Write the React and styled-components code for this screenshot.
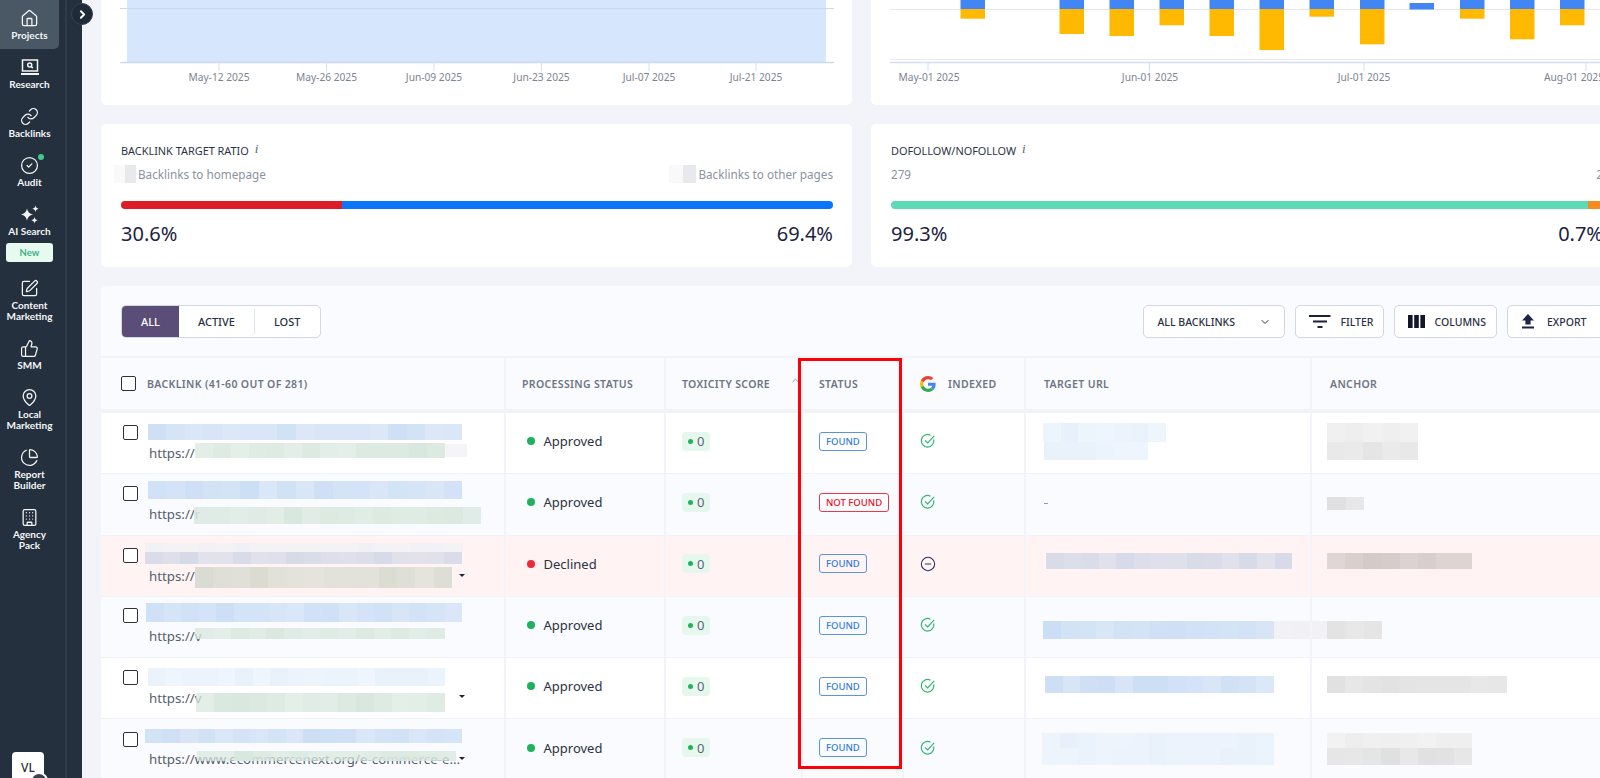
import React from "react";
import styled, { createGlobalStyle } from "styled-components";
import {
  House,
  Link as LinkIcon,
  CircleCheck,
  SquarePen,
  ThumbsUp,
  MapPin,
  ChartPie,
  Building,
  ChevronRight,
  ChevronDown,
  ChevronUp,
  CircleMinus,
} from "lucide-react";

const GlobalStyle = createGlobalStyle`
  html, body {
    margin: 0;
    height: 100%;
    overflow: hidden;
    background: #f2f4f9;
    font-family: "Noto Sans", Arial, sans-serif;
  }
`;

/* ---- data ---- */

const NAV = [
  { icon: "home", label: ["Projects"], active: true },
  { icon: "research", label: ["Research"] },
  { icon: "link", label: ["Backlinks"] },
  { icon: "audit", label: ["Audit"], dot: true },
  { icon: "ai", label: ["AI Search"], isNew: true },
  { icon: "pen", label: ["Content", "Marketing"] },
  { icon: "thumb", label: ["SMM"] },
  { icon: "pin", label: ["Local", "Marketing"] },
  { icon: "pie", label: ["Report", "Builder"] },
  { icon: "building", label: ["Agency", "Pack"] },
];

const TONES = {
  blue: [204, 222, 245],
  paleBlue: [232, 241, 251],
  dusk: [214, 218, 232],
  green: [217, 232, 223],
  dirt: [218, 220, 210],
  grey: [224, 224, 224],
  paleGrey: [238, 238, 238],
  rose: [212, 202, 200],
  faint: [241, 241, 245],
};

// redaction boxes: [left, top, width, height, tone, seed], relative to their cell
const ROWS = [
  {
    checkTop: 11.5,
    urlTop: 30,
    url: "https://",
    process: "Approved",
    status: "FOUND",
    indexed: true,
    back: [
      [47, 11, 314, 16, "blue", 1],
      [94, 30, 250, 15, "green", 2],
      [344, 31, 22, 13, "faint", 3],
    ],
    target: [
      [17, 10, 123, 19, "paleBlue", 4],
      [18, 29, 104, 18, "paleBlue", 5],
    ],
    anchor: [
      [15, 10, 91, 19, "paleGrey", 6],
      [15, 29, 91, 18, "grey", 7],
    ],
  },
  {
    checkTop: 12,
    urlTop: 30,
    url: "https://r",
    process: "Approved",
    status: "NOT FOUND",
    indexed: true,
    dash: true,
    back: [
      [47, 7, 314, 18, "blue", 8],
      [93, 33, 287, 17, "green", 9],
    ],
    target: [],
    anchor: [[15, 23, 37, 13, "grey", 10]],
  },
  {
    checkTop: 12,
    urlTop: 30,
    url: "https://",
    process: "Declined",
    status: "FOUND",
    indexed: false,
    caret: 38,
    tint: true,
    back: [
      [44, 7, 318, 9, "faint", 11],
      [44, 16, 317, 12, "dusk", 12],
      [94, 31, 257, 21, "dirt", 13],
    ],
    target: [[20, 17, 246, 16, "dusk", 14]],
    anchor: [[15, 17, 145, 16, "rose", 15]],
  },
  {
    checkTop: 11,
    urlTop: 29,
    url: "https://v",
    process: "Approved",
    status: "FOUND",
    indexed: true,
    back: [
      [45, 6, 316, 19, "blue", 16],
      [94, 31, 250, 11, "green", 17],
    ],
    target: [
      [17, 24, 231, 18, "blue", 18],
      [248, 24, 74, 18, "faint", 19],
    ],
    anchor: [[15, 24, 55, 18, "grey", 20]],
  },
  {
    checkTop: 11.5,
    urlTop: 30,
    url: "https://v",
    process: "Approved",
    status: "FOUND",
    indexed: true,
    caret: 37,
    back: [
      [47, 10, 297, 18, "paleBlue", 21],
      [95, 35, 249, 19, "green", 22],
    ],
    target: [[19, 18, 229, 17, "blue", 23]],
    anchor: [[15, 18, 180, 17, "grey", 24]],
  },
  {
    checkTop: 12.5,
    urlTop: 30,
    url: "https://www.ecommercenext.org/e-commerce-e...",
    process: "Approved",
    status: "FOUND",
    indexed: true,
    caret: 38,
    back: [
      [44, 10, 317, 14, "blue", 25],
      [96, 32, 259, 10, "green", 26],
    ],
    target: [
      [16, 14, 232, 15, "paleBlue", 27],
      [16, 29, 232, 17, "paleBlue", 28],
    ],
    anchor: [
      [15, 14, 145, 15, "paleGrey", 29],
      [15, 29, 145, 17, "grey", 30],
    ],
  },
];

const AREA_TICKS = [
  [118, "May-12 2025"],
  [225.5, "May-26 2025"],
  [333, "Jun-09 2025"],
  [440.5, "Jun-23 2025"],
  [548, "Jul-07 2025"],
  [655, "Jul-21 2025"],
];

const BAR_TICKS = [
  [57, 58, "May-01 2025"],
  [278.5, 279, "Jun-01 2025"],
  [493, 493, "Jul-01 2025"],
  [715, 703, "Aug-01 2025"],
];

// left edge, bottom of the yellow part
const BARS = [
  [89.5, 18.7],
  [188.5, 34],
  [238.5, 36],
  [288.5, 25.3],
  [338.5, 36],
  [388.5, 50],
  [438.5, 16.7],
  [489, 44.3],
  [589, 18.7],
  [639, 39.3],
  [689, 25.3],
];

/* ---- icons ---- */

const ResearchIcon = () => (
  <svg width="20" height="20" viewBox="0 0 20 20" fill="none" stroke="currentColor" strokeWidth="1.5">
    <rect x="2.5" y="3" width="15" height="11" />
    <circle cx="9.7" cy="8" r="2" />
    <path d="M11.2 9.5l1.6 1.6" />
    <path d="M1 17h18" strokeWidth="2" />
  </svg>
);

const SparkleIcon = () => (
  <svg width="20" height="20" viewBox="0 0 20 20" fill="currentColor">
    <path d="M7 4.500c.7 3.600 2.400 5.300 6 6-3.600.7-5.300 2.400-6 6-.7-3.600-2.400-5.300-6-6 3.600-.7 5.300-2.400 6-6z" />
    <path d="M15.500 1.500c.4 2 1.200 2.800 3.200 3.200-2 .4-2.800 1.200-3.200 3.200-.4-2-1.200-2.800-3.200-3.200 2-.4 2.800-1.200 3.200-3.200z" />
    <path d="M14.500 13c.4 2 1.200 2.800 3.200 3.200-2 .4-2.800 1.200-3.200 3.200-.4-2-1.200-2.800-3.200-3.200 2-.4 2.800-1.200 3.200-3.200z" />
  </svg>
);

const NavGlyph = ({ name }) => {
  const props = { size: 19, strokeWidth: 1.6 };
  switch (name) {
    case "home":
      return <House {...props} />;
    case "research":
      return <ResearchIcon />;
    case "link":
      return <LinkIcon {...props} />;
    case "audit":
      return <CircleCheck {...props} />;
    case "ai":
      return <SparkleIcon />;
    case "pen":
      return <SquarePen {...props} />;
    case "thumb":
      return <ThumbsUp {...props} />;
    case "pin":
      return <MapPin {...props} />;
    case "pie":
      return <ChartPie {...props} />;
    default:
      return <Building {...props} />;
  }
};

const GoogleIcon = () => (
  <svg width="16" height="16" viewBox="0 0 48 48">
    <path fill="#EA4335" d="M24 9.500c3.540 0 6.710 1.220 9.210 3.600l6.850-6.850C35.900 2.380 30.470 0 24 0 14.620 0 6.510 5.380 2.560 13.220l7.980 6.190C12.430 13.720 17.740 9.500 24 9.500z" />
    <path fill="#4285F4" d="M46.980 24.550c0-1.570-.15-3.090-.38-4.550H24v9.020h12.940c-.58 2.960-2.260 5.480-4.780 7.180l7.730 6c4.510-4.180 7.090-10.360 7.090-17.650z" />
    <path fill="#FBBC05" d="M10.530 28.590c-.48-1.450-.76-2.990-.76-4.590s.27-3.140.76-4.590l-7.980-6.190C.92 16.460 0 20.120 0 24c0 3.880.92 7.540 2.560 10.780l7.970-6.190z" />
    <path fill="#34A853" d="M24 48c6.480 0 11.930-2.130 15.890-5.810l-7.730-6c-2.150 1.450-4.920 2.300-8.160 2.300-6.260 0-11.570-4.220-13.470-9.910l-7.980 6.190C6.510 42.620 14.620 48 24 48z" />
  </svg>
);

const FilterIcon = () => (
  <svg width="22" height="14" viewBox="0 0 22 14" fill="#1d2238">
    <rect x="0" y="0" width="21.500" height="2" />
    <rect x="4" y="5.500" width="14" height="2" />
    <rect x="8.500" y="11" width="5" height="2" />
  </svg>
);

const ColumnsIcon = () => (
  <svg width="17" height="14" viewBox="0 0 17 14" fill="#14172c">
    <rect x="0" y="0" width="4.600" height="13" />
    <rect x="6.200" y="0" width="4.600" height="13" />
    <rect x="12.400" y="0" width="4.600" height="13" />
  </svg>
);

const ExportIcon = () => (
  <svg width="14" height="15" viewBox="0 0 14 15" fill="#1d2448">
    <path d="M7 0l6 6.500H9.600v4H4.400v-4H1z" />
    <rect x="1" y="12.500" width="12" height="2" />
  </svg>
);

/* ---- redaction mosaic ---- */

const cellAlpha = (seed, i) => {
  const v = Math.sin(seed * 91.7 + i * 37.3) * 4375.5;
  return 0.68 + 0.32 * (v - Math.floor(v));
};

const Redaction = ({ box }) => {
  const [left, top, width, height, tone, seed] = box;
  const [r, g, b] = TONES[tone];
  const count = Math.max(1, Math.round(width / 18));
  return (
    <Mosaic style={{ left, top, width, height }}>
      {Array.from({ length: count }, (_, i) => (
        <MosaicCell key={i} style={{ background: `rgba(${r},${g},${b},${cellAlpha(seed, i)})` }} />
      ))}
    </Mosaic>
  );
};

/* ---- page ---- */

export default function App() {
  return (
    <Page>
      <GlobalStyle />
      <Sidebar>
        <ToggleButton>
          <ChevronRight size={13} strokeWidth={3.5} />
        </ToggleButton>
        <NavColumn>
          {NAV.map((item) => (
            <NavItem key={item.icon} $active={item.active}>
              <NavIcon>
                <NavGlyph name={item.icon} />
                {item.dot && <NavDot />}
              </NavIcon>
              {item.label.map((line) => (
                <NavLabel key={line}>{line}</NavLabel>
              ))}
              {item.isNew && <NewBadge>New</NewBadge>}
            </NavItem>
          ))}
          <Avatar>
            VL
            <AvatarBadge />
          </Avatar>
        </NavColumn>
      </Sidebar>

      <Main>
        <CardGrid>
          <ChartCard>
            <svg width="751" height="105" viewBox="0 0 751 105">
              <rect x="26" y="0" width="699" height="62" fill="#d6e6fc" />
              <line x1="19" x2="733" y1="8.500" y2="8.500" stroke="#c9d8ef" />
              <line x1="19" x2="733" y1="62.500" y2="62.500" stroke="#cbd9f2" strokeWidth="1.500" />
              {AREA_TICKS.map(([x, label]) => (
                <g key={label}>
                  <line x1={x} x2={x} y1="62" y2="71" stroke="#d5e0f2" />
                  <ChartLabel x={x} y="81" textAnchor="middle">
                    {label}
                  </ChartLabel>
                </g>
              ))}
            </svg>
          </ChartCard>
          <ChartCard>
            <svg width="751" height="105" viewBox="0 0 751 105">
              <line x1="19" x2="751" y1="9.500" y2="9.500" stroke="#e6e8ee" />
              <line x1="19" x2="751" y1="59.500" y2="59.500" stroke="#e9ebf0" />
              <line x1="19" x2="751" y1="62.500" y2="62.500" stroke="#d5dff1" strokeWidth="1.500" />
              {BARS.map(([x, bottom]) => (
                <g key={x}>
                  <rect x={x} y="0" width="24.500" height="9" fill="#4285f4" />
                  <rect x={x} y="9" width="24.500" height={bottom - 9} fill="#ffb900" />
                </g>
              ))}
              <rect x="538.500" y="3" width="24.500" height="6.500" fill="#4285f4" />
              {BAR_TICKS.map(([tick, x, label]) => (
                <g key={label}>
                  <line x1={tick} x2={tick} y1="62" y2="71" stroke="#d5e0f2" />
                  <ChartLabel x={x} y="81" textAnchor="middle">
                    {label}
                  </ChartLabel>
                </g>
              ))}
            </svg>
          </ChartCard>

          <RatioCard>
            <RatioTitle>
              Backlink target ratio <InfoMark>i</InfoMark>
            </RatioTitle>
            <RatioLegend>
              <LegendItem>
                <Smudge $width={22} $pull={7} />
                Backlinks to homepage
              </LegendItem>
              <LegendItem>
                <Smudge $width={27} />
                Backlinks to other pages
              </LegendItem>
            </RatioLegend>
            <Bar>
              <BarPart $color="#dc1d28" style={{ width: "31.1%" }} />
              <BarPart $color="#0d75fb" style={{ flex: 1 }} />
            </Bar>
            <RatioValues>
              <span>30.6%</span>
              <span>69.4%</span>
            </RatioValues>
          </RatioCard>

          <RatioCard>
            <RatioTitle>
              Dofollow/Nofollow <InfoMark>i</InfoMark>
            </RatioTitle>
            <RatioLegend>
              <LegendItem>279</LegendItem>
              <LegendItem>2</LegendItem>
            </RatioLegend>
            <Bar>
              <BarPart $color="#5cdab5" style={{ width: "97.9%" }} />
              <BarPart $color="#f98a1e" style={{ flex: 1 }} />
            </Bar>
            <RatioValues>
              <span>99.3%</span>
              <span>0.7%</span>
            </RatioValues>
          </RatioCard>
        </CardGrid>

        <Panel>
          <Toolbar>
            <Tabs>
              <Tab $selected>All</Tab>
              <Tab>Active</Tab>
              <TabDivider />
              <Tab>Lost</Tab>
            </Tabs>
            <ToolbarActions>
              <SelectButton>
                All backlinks
                <ChevronDown size={12} strokeWidth={2} />
              </SelectButton>
              <ToolButton>
                <FilterIcon />
                Filter
              </ToolButton>
              <ToolButton>
                <ColumnsIcon />
                Columns
              </ToolButton>
              <ExportButton>
                <ExportIcon />
                Export
              </ExportButton>
            </ToolbarActions>
          </Toolbar>

          <HeaderRow>
            <HeaderCell $first>
              <CheckBox />
              Backlink (41-60 out of 281)
            </HeaderCell>
            <HeaderCell>Processing status</HeaderCell>
            <HeaderCell>
              Toxicity score
              <SortMark>
                <ChevronUp size={11} strokeWidth={1.6} />
              </SortMark>
            </HeaderCell>
            <HeaderCell>Status</HeaderCell>
            <HeaderCell>
              <GoogleIcon />
              Indexed
            </HeaderCell>
            <HeaderCell $wide>Target URL</HeaderCell>
            <HeaderCell $wide>Anchor</HeaderCell>
          </HeaderRow>

          <RowList>
            {ROWS.map((row, index) => (
              <Row key={index} $tint={row.tint} $odd={index % 2 === 0}>
                <BacklinkCell>
                  <CheckBox style={{ marginTop: row.checkTop }} />
                  <UrlText style={{ marginTop: row.urlTop }}>{row.url}</UrlText>
                  {row.back.map((box) => (
                    <Redaction key={box[5]} box={box} />
                  ))}
                  {row.caret && <Caret style={{ top: row.caret }} />}
                </BacklinkCell>
                <Cell>
                  <ProcessDot $declined={row.process === "Declined"} />
                  <ProcessText>{row.process}</ProcessText>
                </Cell>
                <Cell>
                  <ScoreBadge>
                    <ScoreDot />0
                  </ScoreBadge>
                </Cell>
                <Cell>
                  <StatusBadge $missing={row.status === "NOT FOUND"}>{row.status}</StatusBadge>
                </Cell>
                <Cell>
                  {row.indexed ? (
                    <IndexedMark>
                      <svg width="16" height="16" viewBox="0 0 16 16" fill="none" stroke="#2fb673" strokeWidth="1.200">
                        <path d="M13.700 6.300A6.300 6.300 0 1 1 10.500 2.200" />
                        <path d="M5 7.300l2.600 2.600 6.600-7" />
                      </svg>
                    </IndexedMark>
                  ) : (
                    <CircleMinus size={16} strokeWidth={1.6} color="#2b2f55" />
                  )}
                </Cell>
                <BlurCell>
                  {row.dash && <Dash />}
                  {row.target.map((box) => (
                    <Redaction key={box[5]} box={box} />
                  ))}
                </BlurCell>
                <BlurCell>
                  {row.anchor.map((box) => (
                    <Redaction key={box[5]} box={box} />
                  ))}
                </BlurCell>
              </Row>
            ))}
          </RowList>

          <Highlight />
        </Panel>
      </Main>
    </Page>
  );
}

const COLUMNS = "403px 160px 137px 101px 122px 286px 1fr";

const Page = styled.div`
  display: flex;
  width: 1600px;
  height: 778px;
  overflow: hidden;
  background: #f2f4f9;
`;

const Sidebar = styled.aside`
  position: relative;
  flex: 0 0 82px;
  height: 778px;
  background: #24303d;
  z-index: 2;
`;

const ToggleButton = styled.div`
  position: absolute;
  left: 71px;
  top: 3px;
  width: 22px;
  height: 22px;
  border-radius: 50%;
  display: flex;
  align-items: center;
  justify-content: center;
  background: #1f2a36;
  border: 1px solid #35414e;
  box-sizing: border-box;
  color: #fff;
`;

const NavColumn = styled.nav`
  width: 67px;
  height: 100%;
  box-sizing: border-box;
  border-right: 2px solid #2f3b49;
  display: flex;
  flex-direction: column;
  overflow: hidden;
`;

const NavItem = styled.div`
  width: 59px;
  padding: 8px 0 8.5px;
  display: flex;
  flex-direction: column;
  align-items: center;
  color: #f3f5f7;
  background: ${(p) => (p.$active ? "#4a5866" : "transparent")};
  border-radius: 0 0 5px 0;
`;

const NavIcon = styled.div`
  position: relative;
  width: 20px;
  height: 20px;
  margin-bottom: 1.5px;
  display: flex;
  align-items: center;
  justify-content: center;
`;

const NavDot = styled.span`
  position: absolute;
  right: -4px;
  top: -1px;
  width: 6px;
  height: 6px;
  border-radius: 50%;
  background: #3fc98c;
`;

const NavLabel = styled.div`
  font-family: Lato, sans-serif;
  font-size: 10px;
  font-weight: 700;
  line-height: 11px;
  white-space: nowrap;
  text-align: center;
`;

const NewBadge = styled.div`
  margin-top: 6.5px;
  width: 47px;
  height: 19px;
  border-radius: 3px;
  background: #e6faf0;
  color: #3db087;
  font-family: Lato, sans-serif;
  font-size: 9.5px;
  font-weight: 700;
  line-height: 19px;
  text-align: center;
`;

const Avatar = styled.div`
  position: relative;
  margin: auto 0 0 12px;
  width: 32px;
  height: 26px;
  box-sizing: border-box;
  padding: 10px 0 0 9px;
  border-radius: 4px 4px 0 0;
  background: #fff;
  color: #27303c;
  font-size: 12px;
  line-height: 12px;
  font-weight: 500;
`;

const AvatarBadge = styled.span`
  position: absolute;
  left: 18px;
  top: 20px;
  width: 14px;
  height: 14px;
  border-radius: 50%;
  border: 2px solid #fff;
  background: #3a4350;
`;

const Main = styled.main`
  flex: 0 0 1522px;
  padding-left: 19px;
  display: flex;
  flex-direction: column;
  gap: 19px;
`;

const CardGrid = styled.div`
  display: grid;
  grid-template-columns: 751px 751px;
  grid-template-rows: 105px 143px;
  gap: 19px;
`;

const ChartCard = styled.section`
  background: #fff;
  border-radius: 0 0 5px 5px;
  overflow: hidden;
  svg {
    display: block;
  }
`;

const ChartLabel = styled.text`
  font-family: "Noto Sans", Arial, sans-serif;
  font-size: 10.200px;
  fill: #7c8492;
`;

const RatioCard = styled.section`
  background: #fff;
  border-radius: 5px;
  padding: 19px 19px 0 20px;
`;

const RatioTitle = styled.div`
  font-size: 10.900px;
  line-height: 15px;
  text-transform: uppercase;
  color: #2b3346;
  white-space: nowrap;
`;

const InfoMark = styled.i`
  font-family: "Liberation Serif", serif;
  font-size: 13px;
  text-transform: none;
  color: #5a6270;
  margin-left: 3px;
  position: relative;
  top: -2px;
`;

const RatioLegend = styled.div`
  margin-top: 7px;
  height: 18px;
  display: flex;
  justify-content: space-between;
  align-items: center;
  font-size: 11.700px;
  color: #8b93a1;
`;

const LegendItem = styled.div`
  display: flex;
  align-items: center;
  white-space: nowrap;
`;

const Smudge = styled.span`
  width: ${(p) => p.$width}px;
  height: 18px;
  margin-left: ${(p) => (p.$pull ? `-${p.$pull}px` : "0")};
  margin-right: 2px;
  background: linear-gradient(90deg, #f9f9fa 50%, #e8e9ec 50%);
`;

const Bar = styled.div`
  margin-top: 18px;
  height: 8px;
  display: flex;
  border-radius: 4px;
  overflow: hidden;
`;

const BarPart = styled.div`
  background: ${(p) => p.$color};
`;

const RatioValues = styled.div`
  margin-top: 12px;
  display: flex;
  justify-content: space-between;
  font-size: 20px;
  line-height: 26px;
  color: #1c2340;
`;

const Panel = styled.section`
  position: relative;
  width: 1522px;
  background: #fafbfe;
  border-radius: 5px 5px 0 0;
`;

const Toolbar = styled.div`
  height: 72px;
  box-sizing: border-box;
  padding: 19px 18px 0 20px;
  display: flex;
  justify-content: space-between;
  align-items: flex-start;
  border-bottom: 2px solid #f1f3f9;
`;

const Tabs = styled.div`
  height: 33px;
  width: 200px;
  box-sizing: border-box;
  display: flex;
  align-items: center;
  background: #fff;
  border: 1.500px solid #d3d6e4;
  border-radius: 5px;
  overflow: hidden;
`;

const Tab = styled.div`
  height: 100%;
  padding: 0 19px;
  display: flex;
  align-items: center;
  font-size: 11px;
  font-weight: 500;
  text-transform: uppercase;
  color: ${(p) => (p.$selected ? "#fff" : "#2a3043")};
  background: ${(p) => (p.$selected ? "#5a4e78" : "transparent")};
`;

const TabDivider = styled.span`
  width: 1px;
  height: 25px;
  background: #e3e5ee;
`;

const ToolbarActions = styled.div`
  display: flex;
  gap: 10px;
`;

const ToolButton = styled.div`
  height: 33px;
  box-sizing: border-box;
  padding: 0 10px 0 13px;
  display: flex;
  align-items: center;
  gap: 9px;
  background: #fff;
  border: 1.500px solid #d3d6e4;
  border-radius: 5px;
  font-size: 10.500px;
  font-weight: 500;
  text-transform: uppercase;
  color: #2a3043;
`;

const SelectButton = styled(ToolButton)`
  width: 142px;
  justify-content: space-between;
  padding-right: 13px;
`;

const ExportButton = styled(ToolButton)`
  width: 98px;
  gap: 12px;
`;

const HeaderRow = styled.div`
  height: 51px;
  display: grid;
  grid-template-columns: ${COLUMNS};
  border-bottom: 4px solid #f1f3f9;
`;

const HeaderCell = styled.div`
  position: relative;
  display: flex;
  align-items: center;
  gap: ${(p) => (p.$first ? "11px" : "12px")};
  padding-left: ${(p) => (p.$first ? "20px" : p.$wide ? "18px" : "16px")};
  border-left: ${(p) => (p.$first ? "none" : "2px solid #f3f4f9")};
  box-sizing: border-box;
  font-size: 10.500px;
  font-weight: 600;
  letter-spacing: 0.35px;
  text-transform: uppercase;
  color: #6c7585;
  white-space: nowrap;
`;

const SortMark = styled.span`
  position: absolute;
  right: 0;
  top: 17px;
  color: #6c7585;
`;

const RowList = styled.div`
  display: flex;
  flex-direction: column;
`;

const Row = styled.div`
  height: 61.300px;
  box-sizing: border-box;
  display: grid;
  grid-template-columns: ${COLUMNS};
  border-bottom: 1px solid #f1f2f7;
  background: ${(p) => (p.$tint ? "#fff4f3" : p.$odd ? "#fff" : "#fafbfe")};
`;

const Cell = styled.div`
  display: flex;
  align-items: center;
  gap: 9px;
  padding: 0 16px 4px;
  border-left: 2px solid #f3f4f9;
  box-sizing: border-box;
`;

const BacklinkCell = styled.div`
  position: relative;
  display: flex;
  align-items: flex-start;
  gap: 11px;
  padding-left: 22px;
`;

const BlurCell = styled.div`
  position: relative;
  border-left: 2px solid #f3f4f9;
  box-sizing: border-box;
`;

const Mosaic = styled.div`
  position: absolute;
  display: flex;
`;

const MosaicCell = styled.span`
  flex: 1;
`;

const CheckBox = styled.span`
  flex: none;
  width: 15px;
  height: 15px;
  box-sizing: border-box;
  border: 1.800px solid #2f3135;
  border-radius: 2px;
  background: #fff;
`;

const UrlText = styled.div`
  font-size: 13.300px;
  line-height: 20px;
  color: #555e6c;
  white-space: nowrap;
`;

const Caret = styled.span`
  position: absolute;
  left: 358px;
  width: 0;
  height: 0;
  border-left: 3.500px solid transparent;
  border-right: 3.500px solid transparent;
  border-top: 3.500px solid #20242c;
`;

const ProcessDot = styled.span`
  flex: none;
  margin-left: 4.500px;
  width: 8px;
  height: 8px;
  border-radius: 50%;
  background: ${(p) => (p.$declined ? "#ee2a3a" : "#1fb25d")};
`;

const ProcessText = styled.span`
  font-size: 13px;
  color: #2a3242;
`;

const ScoreBadge = styled.span`
  display: inline-flex;
  align-items: center;
  gap: 4px;
  height: 19px;
  width: 28px;
  box-sizing: border-box;
  padding-left: 6px;
  border-radius: 4px;
  background: #e6f8ee;
  font-size: 13px;
  color: #5b6677;
`;

const ScoreDot = styled.span`
  width: 5px;
  height: 5px;
  border-radius: 50%;
  background: #1fb25d;
`;

const StatusBadge = styled.span`
  height: 19px;
  box-sizing: border-box;
  padding: 0 6px;
  display: inline-flex;
  align-items: center;
  border: 1px solid ${(p) => (p.$missing ? "#e8384a" : "#5b93e0")};
  border-radius: 3px;
  font-size: 9.500px;
  font-weight: 500;
  color: ${(p) => (p.$missing ? "#e5121f" : "#2f7be0")};
  white-space: nowrap;
`;

const IndexedMark = styled.span`
  display: inline-flex;
`;

const Dash = styled.span`
  position: absolute;
  left: 18px;
  top: 29px;
  width: 4px;
  height: 1px;
  background: #7f9fd4;
`;

const Highlight = styled.div`
  position: absolute;
  left: 697px;
  top: 72px;
  width: 104px;
  height: 411px;
  box-sizing: border-box;
  border: 3px solid #fb0007;
  pointer-events: none;
`;
